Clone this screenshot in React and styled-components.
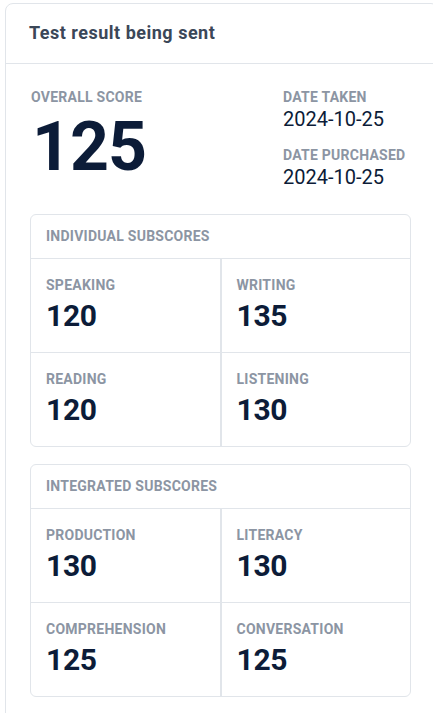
import React from "react";
import styled, { createGlobalStyle } from "styled-components";

const Global = createGlobalStyle`
  html, body { margin: 0; padding: 0; overflow: hidden; background: #ffffff; }
  body { font-family: Roboto, "Liberation Sans", Arial, sans-serif; -webkit-font-smoothing: antialiased; }
`;

const Page = styled.div`
  padding: 3px 0 0 5px;
`;

const Card = styled.section`
  width: 432px;
  border: 1px solid #e1e5ea;
  border-radius: 8px;
  background: #fff;
`;

const CardHeader = styled.header`
  height: 60px;
  padding: 0 23px 2px;
  box-sizing: border-box;
  display: flex;
  align-items: center;
  border-bottom: 1px solid #e1e5ea;
`;

const Title = styled.h2`
  margin: 0;
  font-size: 18px;
  font-weight: 700;
  color: #3b4758;
  line-height: 24px;
  letter-spacing: 0.5px;
`;

const CardBody = styled.div`
  padding: 25px 24px 24px 24px;
  width: 381px;
  display: flex;
  flex-direction: column;
  gap: 17px;
`;

const Summary = styled.div`
  display: grid;
  grid-template-columns: 1fr 128px;
  margin-bottom: 8px;
`;

const Label = styled.div`
  font-size: 14px;
  line-height: 16px;
  font-weight: 700;
  color: #8c95a3;
  text-transform: uppercase;
  letter-spacing: 0.25px;
  padding-left: ${(p) => p.$indent || "0"};
`;

const BigScore = styled.div`
  font-size: 68px;
  line-height: 68px;
  font-weight: 700;
  color: #0c1c38;
  margin-top: 8px;
  padding-left: 2px;
  letter-spacing: -1px;
`;

const DateCol = styled.div`
  display: flex;
  flex-direction: column;
  gap: 16px;
`;

const DateGroup = styled.div`
  display: flex;
  flex-direction: column;
  gap: 2px;
`;

const DateValue = styled.div`
  font-size: 20px;
  line-height: 24px;
  font-weight: 400;
  color: #0c1c38;
`;

const Panel = styled.div`
  border: 1px solid #e1e5ea;
  border-radius: 6px;
  overflow: hidden;
`;

const PanelHeader = styled.div`
  padding: 13px 15px 14px;
  border-bottom: 1px solid #e1e5ea;
`;

const Grid = styled.div`
  display: grid;
  grid-template-columns: 1fr 1fr;
`;

const Cell = styled.div`
  padding: 18px 15px 18px;
  display: flex;
  flex-direction: column;
  gap: 5px;
  border-top: ${(p) => (p.$firstRow ? "none" : "1px solid #e1e5ea")};
  border-right: ${(p) => (p.$left ? "1px solid #e1e5ea" : "none")};
  border-left: ${(p) => (p.$left ? "none" : "1px solid #e1e5ea")};
`;

const Score = styled.div`
  font-size: 30px;
  line-height: 36px;
  font-weight: 700;
  color: #0c1c38;
  letter-spacing: -0.3px;
`;

const panels = [
  {
    title: "Individual Subscores",
    items: [
      ["Speaking", 120],
      ["Writing", 135],
      ["Reading", 120],
      ["Listening", 130],
    ],
  },
  {
    title: "Integrated Subscores",
    items: [
      ["Production", 130],
      ["Literacy", 130],
      ["Comprehension", 125],
      ["Conversation", 125],
    ],
  },
];

export default function App() {
  return (
    <Page>
      <Global />
      <Card>
        <CardHeader>
          <Title>Test result being sent</Title>
        </CardHeader>
        <CardBody>
          <Summary>
            <div>
              <Label $indent="1px">Overall Score</Label>
              <BigScore>125</BigScore>
            </div>
            <DateCol>
              <DateGroup>
                <Label>Date Taken</Label>
                <DateValue>2024-10-25</DateValue>
              </DateGroup>
              <DateGroup>
                <Label>Date Purchased</Label>
                <DateValue>2024-10-25</DateValue>
              </DateGroup>
            </DateCol>
          </Summary>
          {panels.map((panel) => (
            <Panel key={panel.title}>
              <PanelHeader>
                <Label>{panel.title}</Label>
              </PanelHeader>
              <Grid>
                {panel.items.map(([name, value], i) => (
                  <Cell key={name} $left={i % 2 === 0} $firstRow={i < 2}>
                    <Label>{name}</Label>
                    <Score>{value}</Score>
                  </Cell>
                ))}
              </Grid>
            </Panel>
          ))}
        </CardBody>
      </Card>
    </Page>
  );
}
